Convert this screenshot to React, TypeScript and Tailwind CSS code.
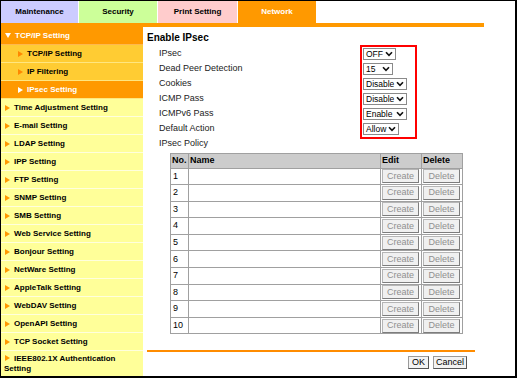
import React from 'react';

const TABS = [
  { label: 'Maintenance', cls: 'w-[77px] bg-[#ccccff] text-black' },
  { label: 'Security', cls: 'w-[78px] bg-[#ccff99] text-black' },
  { label: 'Print Setting', cls: 'w-[79px] bg-[#ffcccc] text-black' },
  { label: 'Network', cls: 'w-[78px] bg-[#ff9900] text-white' },
];

const MENU = [
  'Time Adjustment Setting',
  'E-mail Setting',
  'LDAP Setting',
  'IPP Setting',
  'FTP Setting',
  'SNMP Setting',
  'SMB Setting',
  'Web Service Setting',
  'Bonjour Setting',
  'NetWare Setting',
  'AppleTalk Setting',
  'WebDAV Setting',
  'OpenAPI Setting',
  'TCP Socket Setting',
];

const FIELDS = [
  { label: 'IPsec', value: 'OFF', w: 'w-[33px]' },
  { label: 'Dead Peer Detection', value: '15', w: 'w-[30px]' },
  { label: 'Cookies', value: 'Disable', w: 'w-[44px]' },
  { label: 'ICMP Pass', value: 'Disable', w: 'w-[44px]' },
  { label: 'ICMPv6 Pass', value: 'Enable', w: 'w-[44px]' },
  { label: 'Default Action', value: 'Allow', w: 'w-[36px]' },
];

// small right-pointing triangle used in the side menu
const Arrow = ({ fill }: { fill: string }) => (
  <svg width="5" height="6" viewBox="0 0 5 6" className="inline-block mr-[4px] align-[0px]">
    <polygon points="0,0 5,3 0,6" fill={fill} />
  </svg>
);

const Chevron = () => (
  <svg width="8" height="6" viewBox="0 0 8 6" className="shrink-0">
    <polyline points="1,1.2 4,4.4 7,1.2" fill="none" stroke="#111" strokeWidth="1.6" />
  </svg>
);

const FakeSelect = ({ value, w }: { value: string; w: string }) => (
  <div className={`${w} h-[12px] flex items-center justify-between border border-[#8a8a8a] bg-white pl-[2px] pr-[2px] text-[8.5px] leading-none text-black`}>
    <span>{value}</span>
    <Chevron />
  </div>
);

const GrayButton = ({ label, w }: { label: string; w: string }) => (
  <div className={`${w} h-[14px] flex items-center justify-center bg-[#f0f0f0] border border-[#b5b5b5] border-r-[#7d7d7d] border-b-[#7d7d7d] text-[9px] leading-none text-[#8f8f8f]`}>
    {label}
  </div>
);

const App: React.FC = () => {
  return (
    <div className="w-[517px] h-[378px] overflow-hidden bg-white border-t border-l border-r-2 border-b-2 border-black font-['Liberation_Sans',Arial,sans-serif]">
      {/* Tabs */}
      <div className="flex gap-[1px] h-[22px]">
        {TABS.map((t) => (
          <div key={t.label} className={`${t.cls} flex items-center justify-center text-[8px] font-bold`}>
            {t.label}
          </div>
        ))}
      </div>
      <div className="w-[483px] h-[4px] bg-[#ff9900]" />

      <div className="flex">
        {/* Sidebar */}
        <div className="w-[142px] shrink-0 text-[8px] font-bold">
          <div className="h-[18px] flex items-center pl-[4px] bg-[#ff9900] text-white border-b border-[#ffb84d]">
            <svg width="6" height="5" viewBox="0 0 6 5" className="mr-[4px]">
              <polygon points="0,0 6,0 3,5" fill="#fff" />
            </svg>
            TCP/IP Setting
          </div>
          <div className="h-[18px] flex items-center pl-[17px] bg-[#ffcc33] text-black border-b border-[#ffe680]">
            <Arrow fill="#ff8800" />TCP/IP Setting
          </div>
          <div className="h-[18px] flex items-center pl-[17px] bg-[#ffcc33] text-black border-b border-[#ffe680]">
            <Arrow fill="#ff8800" />IP Filtering
          </div>
          <div className="h-[18px] flex items-center pl-[17px] bg-[#ff9900] text-white border-b border-[#ffe680]">
            <Arrow fill="#ffffff" />IPsec Setting
          </div>
          {MENU.map((m) => (
            <div key={m} className="h-[18px] flex items-center pl-[4px] bg-[#ffff99] text-black border-b border-[#ffffdd]">
              <Arrow fill="#ff9900" />{m}
            </div>
          ))}
          <div className="h-[26px] pl-[3px] pt-[3px] bg-[#ffff99] text-black leading-[10px]">
            <span className="pl-[1px]"><Arrow fill="#ff9900" /></span>IEEE802.1X Authentication Setting
          </div>
        </div>

        {/* Main */}
        <div className="flex-1 pl-[4px]">
          <div className="mt-[4px] text-[10px] font-bold leading-[14px] text-black">Enable IPsec</div>

          <div className="flex items-start pl-[12px]">
            <div className="w-[201px] text-[9px] text-[#222]">
              {FIELDS.map((f) => (
                <div key={f.label} className="h-[15px] leading-[16px]">{f.label}</div>
              ))}
              <div className="h-[15px] leading-[16px]">IPsec Policy</div>
            </div>
            <div className="w-[57px] border-2 border-[#ff0000] pl-[1px] pt-[1px] pb-[2px] flex flex-col gap-[3px]">
              {FIELDS.map((f, i) => (
                <FakeSelect key={i} value={f.value} w={f.w} />
              ))}
            </div>
          </div>

          <table className="mt-[3px] ml-[23px] w-[292px] table-fixed border-collapse border border-[#a0a0a0] text-[9px] text-black">
            <colgroup>
              <col className="w-[18px]" />
              <col className="w-[192px]" />
              <col className="w-[41px]" />
              <col className="w-[41px]" />
            </colgroup>
            <thead>
              <tr className="h-[14px] bg-[#cccccc] font-bold">
                <td className="border border-[#a0a0a0] pl-[1px]">No.</td>
                <td className="border border-[#a0a0a0] pl-[1px]">Name</td>
                <td className="border border-[#a0a0a0] pl-[1px]">Edit</td>
                <td className="border border-[#a0a0a0] pl-[1px]">Delete</td>
              </tr>
            </thead>
            <tbody>
              {Array.from({ length: 10 }, (_, i) => (
                <tr key={i} className="h-[16.6px]">
                  <td className="border border-[#a0a0a0] pl-[2px]">{i + 1}</td>
                  <td className="border border-[#a0a0a0]"></td>
                  <td className="border border-[#a0a0a0] pl-[1px]">
                    <GrayButton label="Create" w="w-[37px]" />
                  </td>
                  <td className="border border-[#a0a0a0] pl-[1px]">
                    <GrayButton label="Delete" w="w-[37px]" />
                  </td>
                </tr>
              ))}
            </tbody>
          </table>

          <div className="mt-[16px] w-[328px] h-[2px] bg-[#ff8c00]" />
          <div className="w-[328px] flex justify-end gap-[4px] pr-[8px] mt-[4px] text-[9px] text-black">
            <div className="w-[21px] h-[13px] flex items-center justify-center bg-[#f3f3f3] border border-[#9a9a9a] border-r-[#555] border-b-[#555] leading-none">OK</div>
            <div className="w-[34px] h-[13px] flex items-center justify-center bg-[#f3f3f3] border border-[#9a9a9a] border-r-[#555] border-b-[#555] leading-none">Cancel</div>
          </div>
        </div>
      </div>
    </div>
  );
};

export default App;
